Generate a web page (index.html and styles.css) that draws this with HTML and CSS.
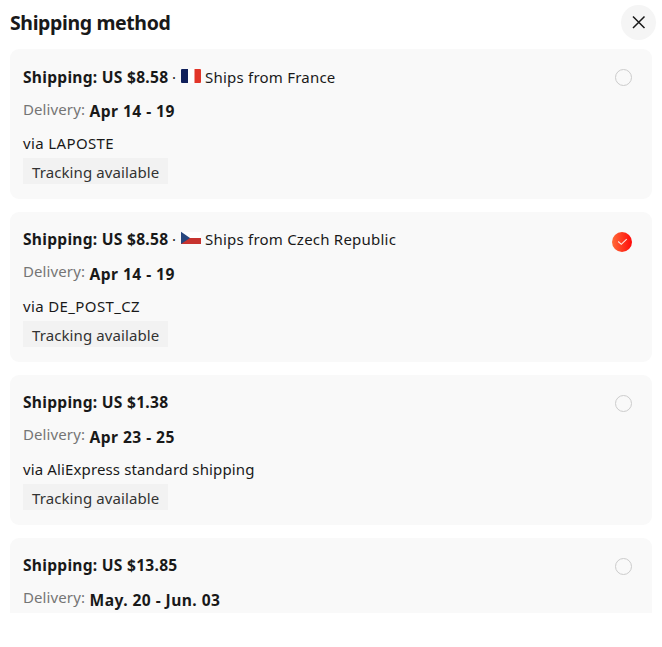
FILE: index.html
```
<!DOCTYPE html>
<html lang="en">
<head>
<meta charset="utf-8">
<title>Shipping method</title>
<link rel="stylesheet" href="styles.css">
</head>
<body>
<main class="dialog">
  <header class="header">
    <h1 class="title">Shipping method</h1>
    <button class="close" aria-label="Close">
      <svg width="35" height="35" viewBox="0 0 35 35"><path d="M12 11.500 23.500 23M23.500 11.500 12 23" fill="none" stroke="#191919" stroke-width="1.500"/></svg>
    </button>
  </header>
  <div class="list">
    <section class="card">
      <div class="info">
        <div class="price"><b class="cost">Shipping: US $8.58</b><span class="dot">·</span><svg class="flag" width="20" height="14" viewBox="0 0 20 14"><path fill="#fff" d="M0 0h20v14H0z"/><path fill="#10205b" d="M1 0h6v14H1a1 1 0 0 1-1-1V1a1 1 0 0 1 1-1z"/><path fill="#e23529" d="M13.500 0H19a1 1 0 0 1 1 1v12a1 1 0 0 1-1 1h-5.500z"/></svg><span class="origin">Ships from France</span></div>
        <div class="delivery"><span class="label">Delivery:</span><b class="date">Apr 14 - 19</b></div>
        <div class="via code">via LAPOSTE</div>
        <div class="tag"><span class="tag-text">Tracking available</span></div>
      </div>
      <span class="radio"></span>
    </section>
    <section class="card">
      <div class="info">
        <div class="price"><b class="cost">Shipping: US $8.58</b><span class="dot">·</span><svg class="flag" width="20" height="14" viewBox="0 0 20 14"><path fill="#fff" d="M0 1h20v6H0z"/><path fill="#c7332f" d="M0 7h20v6H0z"/><path fill="#27467e" d="M0 .8 9 7 0 13z"/></svg><span class="origin">Ships from Czech Republic</span></div>
        <div class="delivery"><span class="label">Delivery:</span><b class="date">Apr 14 - 19</b></div>
        <div class="via code">via DE_POST_CZ</div>
        <div class="tag"><span class="tag-text">Tracking available</span></div>
      </div>
      <span class="radio checked"><svg width="20" height="20" viewBox="0 0 20 20"><path d="m6.200 9.500 3.100 2.800 5.400-5.200" fill="none" stroke="#ffe9e4" stroke-width="1.100"/></svg></span>
    </section>
    <section class="card">
      <div class="info">
        <div class="price"><b class="cost">Shipping: US $1.38</b></div>
        <div class="delivery"><span class="label">Delivery:</span><b class="date">Apr 23 - 25</b></div>
        <div class="via">via AliExpress standard shipping</div>
        <div class="tag"><span class="tag-text">Tracking available</span></div>
      </div>
      <span class="radio"></span>
    </section>
    <section class="card">
      <div class="info">
        <div class="price"><b class="cost">Shipping: US $13.85</b></div>
        <div class="delivery"><span class="label">Delivery:</span><b class="date">May. 20 - Jun. 03</b></div>
      </div>
      <span class="radio"></span>
    </section>
  </div>
</main>
</body>
</html>
```
FILE: styles.css
```
* { box-sizing: border-box; }
body {
  margin: 0;
  background: #fff;
  color: #191919;
  font: 15px/20px "Noto Sans", "Open Sans", sans-serif;
}
.dialog { height: 647px; overflow: hidden; }
.header {
  display: flex;
  justify-content: space-between;
  height: 49px;
  padding: 5px 6px 0 10px;
}
.title { margin: 0; font-size: 19.5px; line-height: 36px; font-weight: 700; letter-spacing: -0.38px; }
.close {
  width: 35px;
  height: 35px;
  padding: 0;
  border: 0;
  border-radius: 50%;
  background: #f5f5f5;
}
.close svg { display: block; }
.list {
  display: flex;
  flex-direction: column;
  gap: 13px;
  height: 564px;
  padding: 0 10px;
  overflow: hidden;
}
.card {
  display: flex;
  flex: none;
  justify-content: space-between;
  height: 150px;
  padding: 18px 20px 0 13px;
  border-radius: 9px;
  background: #f9f9f9;
}
.info { white-space: nowrap; }
.price, .delivery { display: flex; height: 20px; }
.cost, .date { font-size: 15.6px; font-weight: 700; }
.cost { width: 149px; letter-spacing: 0.26px; }
.dot { width: 9px; }
.flag { margin: 2px 4px 0 0; }
.origin { letter-spacing: 0.22px; }
.delivery { margin-top: 12px; }
.label { width: 66px; color: #757575; letter-spacing: 0.1px; }
.date { margin: 2px 0 0 0.5px; letter-spacing: 0.44px; }
.via { margin-top: 14px; letter-spacing: 0.13px; }
.code { letter-spacing: 0.37px; }
.tag {
  width: 145px;
  height: 26px;
  margin-top: 5px;
  padding: 4px 0 0 9px;
  background: #f2f2f2;
  color: #333;
  letter-spacing: 0.1px;
}
.card + .card .info { margin-top: -1px; }
.card + .card .date { margin-top: 3px; }
.card + .card .via { margin-top: 15px; }
.radio {
  width: 17px;
  height: 17px;
  margin-top: 2px;
  border: 1px solid #ccc;
  border-radius: 50%;
}
.checked {
  width: 20px;
  height: 20px;
  border: 0;
  background: linear-gradient(90deg, #ff6b38, #ff0909);
}
.checked svg { display: block; }
```
